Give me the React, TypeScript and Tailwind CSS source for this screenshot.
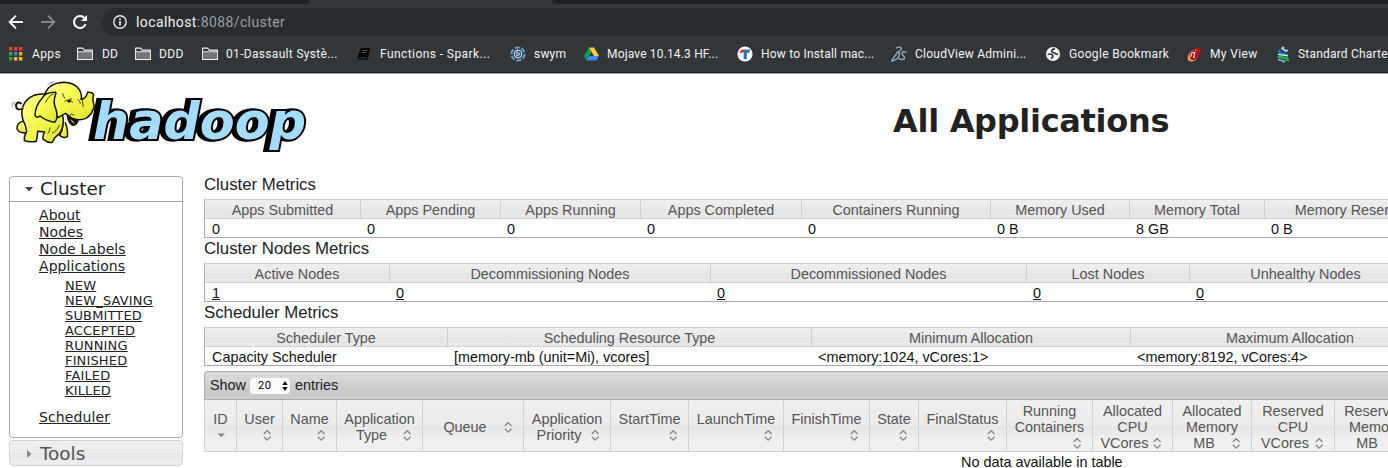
import type { ReactNode } from "react";

const uiFont = "font-['Roboto',sans-serif]";

function Folder() {
  return (
    <svg width="16" height="14" viewBox="0 0 16 14">
      <path d="M.6 12.4V1.1h5l1.6 2h8.2v9.3z" fill="#323639" stroke="#f1f3f4" strokeWidth="1.1" strokeLinejoin="round" />
      <path d="M1.2 5.2h13.6v6.6H1.2z" fill="#73767a" />
      <path d="M1 4.8h14" stroke="#f1f3f4" strokeWidth="1" />
    </svg>
  );
}

function AppsGrid() {
  const colors = ["#ea4335", "#ea4335", "#ea4335", "#34a853", "#2f83f7", "#fbaa05", "#34a853", "#fbbc05", "#fbbc05"];
  return (
    <svg width="14" height="14" viewBox="0 0 14 14">
      {colors.map((c, i) => (
        <rect key={i} x={(i % 3) * 5} y={Math.floor(i / 3) * 5} width="3.3" height="3.5" fill={c} />
      ))}
    </svg>
  );
}

const bookIcon = (
  <svg width="14" height="14" viewBox="0 0 14 14">
    <path d="M4 1h9l-2.4 11.5H1.4Q0 12 .5 10z" fill="#000" />
    <path d="M5.5 3.5h5M5 5.5h5M1.5 10.8h8.6" stroke="#65686b" strokeWidth=".7" />
  </svg>
);
const swymIcon = (
  <svg width="16" height="16" viewBox="0 0 16 16">
    <circle cx="8" cy="8" r="6.6" fill="#1f4560" stroke="#6f9dbb" strokeWidth="2" strokeDasharray="5 1.9" />
    <circle cx="8" cy="8" r="3.9" fill="#35546c" stroke="#e2edf4" strokeWidth="1" />
    <path d="M6.8 5.8v4.4L10 8z" fill="#496579" stroke="#e6eff5" strokeWidth=".8" />
  </svg>
);
const driveIcon = (
  <svg width="15" height="14" viewBox="0 0 15 14">
    <path d="M5 .5 0 9l2.5 4.5L7.5 5z" fill="#0f9d58" />
    <path d="M5 .5h5L15 9h-5z" fill="#ffcd40" />
    <path d="M5 9h10l-2.5 4.5h-10z" fill="#4285f4" />
  </svg>
);
const tIcon = (
  <svg width="16" height="16" viewBox="0 0 16 16">
    <circle cx="8" cy="8" r="7.6" fill="#fff" />
    <path d="M2.5 6.7Q3 4 5.5 3.6H8v3z" fill="#e8312c" />
    <path d="M8 3.6h5.3L12 6.7H9.8v6.5H6.6V8z" fill="#1979bd" />
  </svg>
);
const dsIcon = (
  <svg width="16" height="16" viewBox="0 0 16 16" fill="none" stroke="#91aebe" strokeWidth="1.4" strokeLinecap="round">
    <path d="M5.5 1.8Q10 .2 10.4 2.5 10.3 4.5 6 6.5M6.5 6.5Q9.5 6.5 8 10 6 14 .8 15 1 13.5 5.5 8M14.8 6.2Q12 4.8 11 7q-.2 1.5 2 3.5 1.5 2.5-1.5 3-2 .4-3.5-1" />
  </svg>
);
const globeIcon = (
  <svg width="14" height="14" viewBox="0 0 14 14">
    <circle cx="7" cy="7" r="7" fill="#f8f9fa" />
    <path d="M9 1.6Q6 2 5.6 4.4 6.2 6 8.4 5.8q1.4 1.6 3.8 1.6M1.6 7.2h3.6q2 .6 1.8 2.4l-1.8 2" fill="none" stroke="#323639" strokeWidth="1.6" />
  </svg>
);
const viewIcon = (
  <svg width="15" height="15" viewBox="0 0 15 15">
    <ellipse cx="6.6" cy="8.2" rx="7.4" ry="4.6" transform="rotate(-50 6.6 8.2)" fill="#f2a84b" />
    <ellipse cx="8.2" cy="6.8" rx="7" ry="4.6" transform="rotate(-50 8.2 6.8)" fill="#b31217" />
    <path d="M5.8 6 8 5.4 6.5 10.4l1.5-.5M8.9 2.8l-.3 1.2M3.6 10l1.8-5.4" stroke="#fff" strokeWidth="1" fill="none" />
  </svg>
);
const scIcon = (
  <svg width="13" height="17" viewBox="0 0 13 17" fill="none">
    <path d="M6.5.8 5.2 2.6 8.8 5l2-.7" stroke="#a8d3f3" strokeWidth="2" />
    <path d="M3.5 3.8Q.5 5.5 3 7.3l7.5 1.7" stroke="#1874c9" strokeWidth="2.6" />
    <path d="M1 8.4l9.8 1.4" stroke="#d9eefa" strokeWidth="1.4" />
    <path d="M.7 10.6 9 12.2q2.8.4 1.2 2.7" stroke="#21b24b" strokeWidth="2.6" />
    <path d="M1 13.8l6.5 1.3-1.5 1.4" stroke="#75c7e9" strokeWidth="1.5" />
  </svg>
);

type Bookmark = { icon: ReactNode; label: string; box: string; gap: string; spacing: string };

const bookmarks: Bookmark[] = [
  { icon: <AppsGrid />, label: "Apps", box: "w-[68px]", gap: "w-[23px]", spacing: "tracking-[0.4px]" },
  { icon: <Folder />, label: "DD", box: "w-[58px]", gap: "w-[25px]", spacing: "" },
  { icon: <Folder />, label: "DDD", box: "w-[67px]", gap: "w-6", spacing: "tracking-[0.4px]" },
  { icon: <Folder />, label: "01-Dassault Systè...", box: "w-[155px]", gap: "w-6", spacing: "tracking-[0.32px]" },
  { icon: bookIcon, label: "Functions - Spark...", box: "w-[153px]", gap: "w-[23px]", spacing: "tracking-[0.42px]" },
  { icon: swymIcon, label: "swym", box: "w-[74px]", gap: "w-6", spacing: "tracking-[0.2px]" },
  { icon: driveIcon, label: "Mojave 10.14.3 HF...", box: "w-[153px]", gap: "w-[23px]", spacing: "tracking-[0.16px]" },
  { icon: tIcon, label: "How to Install mac...", box: "w-[154px]", gap: "w-6", spacing: "tracking-[0.2px]" },
  { icon: dsIcon, label: "CloudView Admini...", box: "w-[155px]", gap: "w-6", spacing: "tracking-[0.24px]" },
  { icon: globeIcon, label: "Google Bookmark", box: "w-[141px]", gap: "w-[23px]", spacing: "tracking-[0.33px]" },
  { icon: viewIcon, label: "My View", box: "w-[90px]", gap: "w-[23px]", spacing: "tracking-[0.35px]" },
  { icon: scIcon, label: "Standard Chartered", box: "w-[140px]", gap: "w-[21px]", spacing: "tracking-[0.2px]" },
];

function BrowserChrome() {
  return (
    <header className={`h-[74px] w-full shrink-0 overflow-hidden border-b border-[#a5a5a5] bg-[#323639] ${uiFont}`}>
      <div className="flex h-1 bg-[#323639]">
        <div className="w-[310px] rounded-br-[4px] bg-[#202124]" />
        <div className="w-[242px]" />
        <div className="flex-1 rounded-bl-[4px] bg-[#202124]" />
      </div>
      <div className="mt-1 flex h-7 items-center pl-2">
        <svg width="16" height="16" viewBox="0 0 16 16" fill="none" stroke="#fff" strokeWidth="1.9">
          <path d="M15 8H2M8 1.6 1.6 8 8 14.4" />
        </svg>
        <svg className="ml-4" width="16" height="16" viewBox="0 0 16 16" fill="none" stroke="#84878a" strokeWidth="1.8">
          <path d="M1 8h13M8 1.6 14.4 8 8 14.4" />
        </svg>
        <svg className="ml-4" width="16" height="16" viewBox="0 0 16 16" fill="none" stroke="#fff" strokeWidth="2.1">
          <path d="M13.6 10.2A6 6 0 1 1 12.5 4" />
          <path d="M15 1v6H9z" fill="#fff" stroke="none" />
        </svg>
        <div className="ml-[14px] flex h-7 flex-1 items-center rounded-l-full bg-[#282c2e] pl-[11px]">
          <svg width="14" height="14" viewBox="0 0 14 14">
            <circle cx="7" cy="7" r="6.2" fill="none" stroke="#e8eaed" strokeWidth="1.4" />
            <path d="M7 6v4.4M7 3.4v1.6" stroke="#e8eaed" strokeWidth="1.7" />
          </svg>
          <span className="ml-[9px] whitespace-nowrap text-[14px] leading-7 tracking-[0.4px] text-[#9aa0a6]">
            <span className="text-[#f1f3f4]">localhost</span>:8088/cluster
          </span>
        </div>
      </div>
      <div className="flex h-[37px] items-center border-b border-[#202124] pl-[9px]">
        {bookmarks.map((b) => (
          <div key={b.label} className={`flex shrink-0 items-center ${b.box}`}>
            <span className={`shrink-0 ${b.gap}`}>{b.icon}</span>
            <span className={`whitespace-nowrap text-[12px] text-[#f1f3f4] ${b.spacing}`}>{b.label}</span>
          </div>
        ))}
      </div>
    </header>
  );
}

function HadoopLogo() {
  return (
    <svg width="320" height="88" viewBox="0 6 960 264" className="block shrink-0">
      <defs>
        <linearGradient id="skin" x1="0" y1="0" x2="1" y2="1">
          <stop offset="0" stopColor="#ffff9c" />
          <stop offset=".45" stopColor="#f7fa50" />
          <stop offset="1" stopColor="#dfe32c" />
        </linearGradient>
        <filter id="extrude" x="-10%" y="-10%" width="120%" height="120%">
          <feOffset in="SourceAlpha" dx="-2" dy="0" result="a" />
          <feOffset in="SourceAlpha" dx="-4" dy="0" result="b" />
          <feMerge>
            <feMergeNode in="b" />
            <feMergeNode in="a" />
            <feMergeNode in="SourceGraphic" />
          </feMerge>
        </filter>
      </defs>
      <g transform="translate(0 -216) scale(3)" filter="url(#extrude)">
        <text
          x="93"
          y="138.5"
          textLength="213"
          lengthAdjust="spacingAndGlyphs"
          fontSize="51"
          fontWeight="700"
          fontStyle="italic"
          fontFamily="DejaVu Sans, sans-serif"
          fill="#a3dcfc"
          stroke="#000"
          strokeWidth="4"
          strokeLinejoin="miter"
          paintOrder="stroke"
        >
          hadoop
        </text>
      </g>
      <g stroke="#111" strokeWidth="4.5" strokeLinecap="round" strokeLinejoin="round" fill="url(#skin)">
        <path d="M184 148Q194 162 179 190 190 200 202 194 205 174 196 152" />
        <path d="M67 148Q50 154 51 170 56 183 78 183" />
        <path d="M133 66Q84 64 68 105 60 130 76 160L80 178Q72 190 73 206 90 212 109 208 112 194 113 178L134 180Q126 194 130 202 145 214 157 211 164 194 179 184 190 170 190 142L176 70Z" />
        <path d="M202 128Q204 152 218 160 232 159 234 144Z" fill="#111" />
        <path d="M209 140Q215 155 226 156 222 145 209 140Z" fill="#f0e948" strokeWidth="2" />
        <path d="M134 68Q145 34 190 31 225 32 238 53 248 72 243 82 257 82 263 61 275 59 281 67 276 82 283 102 278 126 258 139 238 147 218 139 205 134 197 124L174 137Z" />
        <path d="M166 61Q136 60 127 78 106 100 105 130 110 140 120 132 139 147 164 151 176 139 168 112 157 91 168 63Z" />
        <path d="M68 109Q49 118 48 101 50 87 63 94" fill="none" strokeWidth="6" />
        <path d="M69 106Q53 115 52 101" fill="none" stroke="#e9ed3c" strokeWidth="2" />
        <g fill="none" strokeWidth="2.4">
          <path d="M137 91Q144 72 160 66M188 65Q189 73 194 78M195 88Q207 78 218 91M208 82L215 81M234 82Q241 87 241 94M247 79L249 103M208 130Q214 122 222 129M144 184Q150 178 150 168M178 160Q171 178 157 183" />
          <path d="M143 39Q145 31 157 31M151 35Q152 31 159 30M37 105Q34 95 40 90M43 99Q40 96 43 91" stroke="#777" strokeWidth="2" />
        </g>
        <ellipse cx="207" cy="88" rx="4.5" ry="4" fill="#111" stroke="none" />
      </g>
    </svg>
  );
}

function Tree({ items, cls }: { items: string[]; cls: string }) {
  return (
    <ul className={cls}>
      {items.map((t) => (
        <li key={t}>
          <a className="underline">{t}</a>
        </li>
      ))}
    </ul>
  );
}

function Sidebar() {
  return (
    <nav className="ml-[9px] w-[174px] shrink-0 font-['DejaVu_Sans',sans-serif] text-[#222]">
      <div className="h-[262px] rounded-[4px] border border-[#aaa] bg-white">
        <h3 className="flex h-[25px] items-center border-b border-[#aaa] pl-[15px] text-[18.4px] leading-6">
          <svg width="8" height="5" viewBox="0 0 8 5" className="mr-[7px]">
            <path d="M0 0h8L4 4.5z" fill="#454545" />
          </svg>
          Cluster
        </h3>
        <Tree
          cls="pt-[5px] pl-[29px] text-[14px] leading-[17px] tracking-[0.05px]"
          items={["About", "Nodes", "Node Labels", "Applications"]}
        />
        <Tree
          cls="pt-[3px] pl-[55px] text-[13px] leading-[15px] tracking-[0.15px]"
          items={["NEW", "NEW_SAVING", "SUBMITTED", "ACCEPTED", "RUNNING", "FINISHED", "FAILED", "KILLED"]}
        />
        <Tree cls="pt-[11px] pl-[29px] text-[14px] leading-[17px] tracking-[0.1px]" items={["Scheduler"]} />
      </div>
      <h3 className="mt-0.5 flex h-[26px] items-center rounded-[4px] border border-[#d3d3d3] bg-[linear-gradient(#efefef,#ebebeb_50%,#e5e5e5_50%,#eeeeee)] pt-px pl-[17px] text-[18.4px] leading-6 text-[#555]">
        <svg width="5" height="8" viewBox="0 0 5 8" className="mr-2">
          <path d="M0 0v8l4.5-4z" fill="#888" />
        </svg>
        Tools
      </h3>
    </nav>
  );
}

type Column = { head: string; value: string; width: string };

function Metrics({ title, columns, links }: { title: string; columns: Column[]; links?: boolean }) {
  return (
    <section className="h-16">
      <h2 className="h-[23px] whitespace-nowrap text-[16.8px] leading-[18px] text-[#222]">{title}</h2>
      <div className="flex h-[39px] border-b border-l border-[#aaa]">
        {columns.map((c, i) => (
          <div key={c.head} className={`shrink-0 whitespace-nowrap ${c.width}`}>
            <div className="h-5 border-y border-r border-[#d0d0d0] bg-[linear-gradient(#eeeeee,#ebebeb_50%,#e5e5e5_50%,#e9e9e9)] text-center text-[14.4px] leading-[20px] text-[#555]">
              {c.head}
            </div>
            <div className={`text-[14.4px] leading-[20px] text-[#111] ${i === 0 ? "pl-[7px]" : "pl-[6px]"}`}>
              {links ? <a className="underline">{c.value}</a> : c.value}
            </div>
          </div>
        ))}
      </div>
    </section>
  );
}

const clusterCols: Column[] = [
  { head: "Apps Submitted", value: "0", width: "w-[156px]" },
  { head: "Apps Pending", value: "0", width: "w-[140px]" },
  { head: "Apps Running", value: "0", width: "w-[140px]" },
  { head: "Apps Completed", value: "0", width: "w-[161px]" },
  { head: "Containers Running", value: "0", width: "w-[189px]" },
  { head: "Memory Used", value: "0 B", width: "w-[139px]" },
  { head: "Memory Total", value: "8 GB", width: "w-[135px]" },
  { head: "Memory Reserved", value: "0 B", width: "w-[178px]" },
];
const nodeCols: Column[] = [
  { head: "Active Nodes", value: "1", width: "w-[185px]" },
  { head: "Decommissioning Nodes", value: "0", width: "w-[321px]" },
  { head: "Decommissioned Nodes", value: "0", width: "w-[316px]" },
  { head: "Lost Nodes", value: "0", width: "w-[163px]" },
  { head: "Unhealthy Nodes", value: "0", width: "w-[232px]" },
];
const schedulerCols: Column[] = [
  { head: "Scheduler Type", value: "Capacity Scheduler", width: "w-[243px]" },
  { head: "Scheduling Resource Type", value: "[memory-mb (unit=Mi), vcores]", width: "w-[364px]" },
  { head: "Minimum Allocation", value: "<memory:1024, vCores:1>", width: "w-[319px]" },
  { head: "Maximum Allocation", value: "<memory:8192, vCores:4>", width: "w-[319px]" },
];

const appCols: { lines: string[]; width: string }[] = [
  { lines: ["ID", ""], width: "w-8" },
  { lines: ["User", ""], width: "w-[46px]" },
  { lines: ["Name", ""], width: "w-[54px]" },
  { lines: ["Application", "Type"], width: "w-[86px]" },
  { lines: ["Queue"], width: "w-[101px]" },
  { lines: ["Application", "Priority"], width: "w-[87px]" },
  { lines: ["StartTime", ""], width: "w-[78px]" },
  { lines: ["LaunchTime", ""], width: "w-[95px]" },
  { lines: ["FinishTime", ""], width: "w-[86px]" },
  { lines: ["State", ""], width: "w-[49px]" },
  { lines: ["FinalStatus", ""], width: "w-[88px]" },
  { lines: ["Running", "Containers", ""], width: "w-[86px]" },
  { lines: ["Allocated", "CPU", "VCores"], width: "w-20" },
  { lines: ["Allocated", "Memory", "MB"], width: "w-[79px]" },
  { lines: ["Reserved", "CPU", "VCores"], width: "w-[83px]" },
  { lines: ["Reserved", "Memory", "MB"], width: "w-[81px]" },
];

function SortIcon({ active }: { active: boolean }) {
  return (
    <svg width="16" height="16" viewBox="0 0 16 16" className="shrink-0">
      {active ? (
        <path d="M4.5 6.5h7.5L8.2 10.3z" fill="#888" />
      ) : (
        <path d="M4.8 7 8.2 3.7 11.6 7M4.8 9.8 8.2 13.1 11.6 9.8" fill="none" stroke="#888" strokeWidth="1.3" />
      )}
    </svg>
  );
}

function Applications() {
  return (
    <section>
      <div className="flex h-[29px] items-center whitespace-nowrap rounded-tl-[4px] border border-r-0 border-[#aaa] bg-[linear-gradient(#dedede,#c9c9c9_70%,#cdcdcd)] pl-[5px] text-[14.4px] text-[#222]">
        Show
        <span className="mr-[5px] ml-1 flex h-4 w-10 items-center rounded-[4px] bg-[#fbfbfb] pt-px pl-2 font-['Roboto',sans-serif] text-[11px] tracking-[0.5px] text-black">
          20
          <svg width="6" height="10" viewBox="0 0 6 10" className="ml-[11px]">
            <path d="M3 0 5.7 4H.3zM3 10 .3 6h5.4z" fill="#111" />
          </svg>
        </span>
        entries
      </div>
      <div className="flex h-[52px] border-b border-l border-[#d0d0d0] text-[14.4px] leading-4 text-[#555]">
        {appCols.map((c, i) => (
          <div
            key={i}
            className={`flex shrink-0 flex-col justify-center border-r border-[#d0d0d0] bg-[linear-gradient(#efefef,#ebebeb_50%,#e6e6e6_50%,#f0f0f0_80%)] pt-0.5 text-center ${c.width}`}
          >
            {c.lines.map((line, j) =>
              j < c.lines.length - 1 ? (
                <div key={j} className="whitespace-nowrap">{line}</div>
              ) : (
                <div key={j} className="flex h-4 items-center pr-[7px] pl-[7px]">
                  <span className="flex-1 whitespace-nowrap">{line}</span>
                  <SortIcon active={i === 0} />
                </div>
              ),
            )}
          </div>
        ))}
      </div>
      <p className="pl-[757px] text-[14.4px] leading-5 whitespace-nowrap text-[#111]">No data available in table</p>
    </section>
  );
}

export default function App() {
  return (
    <div className="flex h-[468px] w-[1388px] flex-col overflow-hidden bg-white">
      <BrowserChrome />
      <div className="flex h-[102px] shrink-0">
        <HadoopLogo />
        <h1 className="ml-[573px] whitespace-nowrap pt-[27px] font-['DejaVu_Sans',sans-serif] text-[32px] leading-10 font-bold tracking-[-0.3px] text-[#222]">
          All Applications
        </h1>
      </div>
      <div className="flex">
        <Sidebar />
        <main className="ml-[21px] w-[1184px] shrink-0 overflow-hidden font-['Liberation_Sans',Arial,sans-serif]">
          <Metrics title="Cluster Metrics" columns={clusterCols} />
          <Metrics title="Cluster Nodes Metrics" columns={nodeCols} links />
          <Metrics title="Scheduler Metrics" columns={schedulerCols} />
          <div className="pt-[3px]">
            <Applications />
          </div>
        </main>
      </div>
    </div>
  );
}
